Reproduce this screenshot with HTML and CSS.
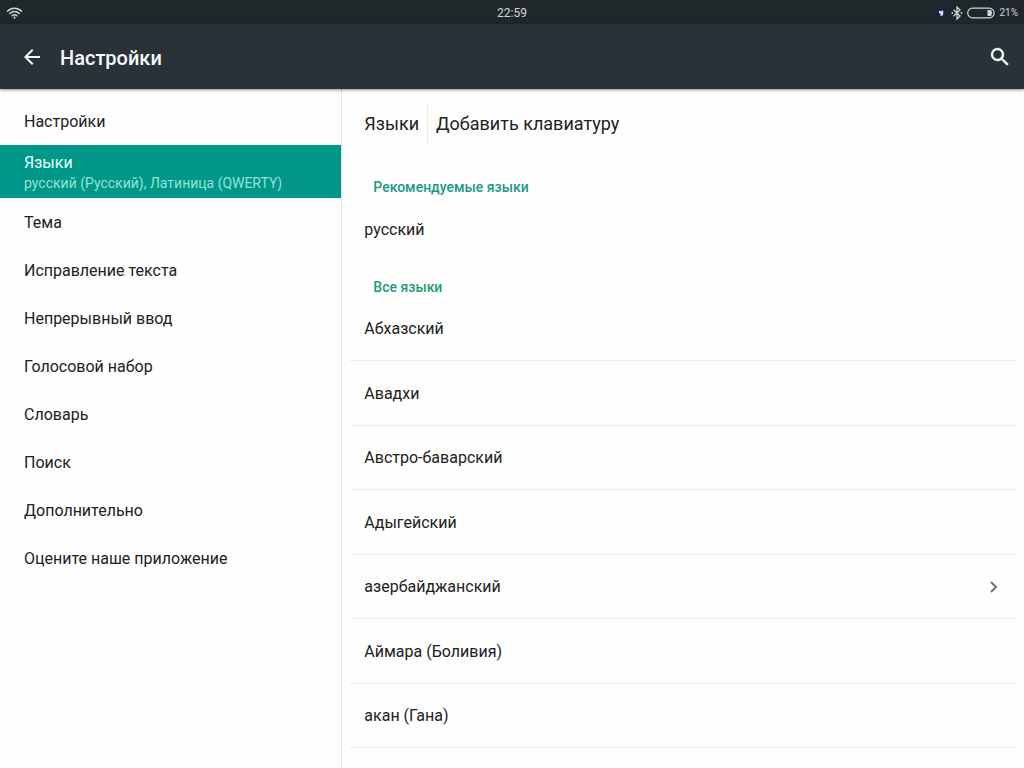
FILE: index.html
```html
<!DOCTYPE html>
<html lang="ru">
<head>
<meta charset="utf-8">
<meta name="viewport" content="width=device-width, initial-scale=1">
<title>Настройки</title>
<link rel="stylesheet" href="styles.css">
</head>
<body>
<div class="status">
  <div class="status-start">
    <svg class="wifi" viewBox="0 0 16 12" aria-hidden="true">
      <g fill="none" stroke="currentColor" stroke-width="1.5" stroke-linecap="round">
        <path d="M1 4.2C5 .1 11 .1 15 4.2"/>
        <path d="M3.3 6.5C6 3.8 10 3.8 12.7 6.5"/>
        <path d="M5.6 8.8C7 7.5 9 7.5 10.4 8.8"/>
      </g>
      <circle cx="8" cy="10.7" r="1.1" fill="currentColor"/>
    </svg>
  </div>
  <time class="clock">22:59</time>
  <div class="status-end">
    <svg class="app-dot" viewBox="0 0 12 12" aria-hidden="true">
      <rect width="12" height="12" rx="3" fill="#1b2340"/>
      <path d="M4 3.4 5.8 4.2 8.2 3.2V7.2C8.2 8.6 6.6 9 4.8 8.5L6 7.2 4 6Z" fill="#d3dfea"/>
    </svg>
    <svg class="bluetooth" viewBox="0 0 12 14" aria-hidden="true">
      <path d="M2.5 3.8 9 10 6 13V1L9 4 2.5 10.2" fill="none" stroke="currentColor" stroke-width="1.3"/>
      <circle cx="1.3" cy="7" r=".9" fill="currentColor"/>
      <circle cx="10.5" cy="7" r=".9" fill="currentColor"/>
    </svg>
    <svg class="battery" viewBox="0 0 28 12" aria-hidden="true">
      <rect x=".7" y="1.2" width="26.4" height="9.6" rx="4.8" fill="none" stroke="currentColor" stroke-width="1.2"/>
      <path d="M20.5 3H24.2Q26 6 24.2 9H20.5Z" fill="currentColor"/>
    </svg>
    <span>21%</span>
  </div>
</div>

<header class="toolbar">
  <button class="icon-button" type="button" aria-label="Назад">
    <svg viewBox="0 0 24 24" aria-hidden="true"><path fill="currentColor" d="M20 11H7.83l5.59-5.59L12 4l-8 8 8 8 1.41-1.41L7.83 13H20v-2z"/></svg>
  </button>
  <h1 class="title">Настройки</h1>
  <button class="icon-button" type="button" aria-label="Поиск">
    <svg viewBox="0 0 24 24" aria-hidden="true"><path fill="currentColor" stroke="currentColor" stroke-width=".4" d="M15.5 14h-.79l-.28-.27A6.47 6.47 0 0 0 16 9.5 6.5 6.5 0 1 0 9.5 16c1.61 0 3.09-.59 4.23-1.57l.27.28v.79l5 4.99L20.49 19l-4.99-5zm-6 0C7.01 14 5 11.99 5 9.5S7.01 5 9.5 5 14 7.01 14 9.5 11.99 14 9.5 14z"/></svg>
  </button>
</header>

<div class="columns">
  <nav class="sidebar">
    <a class="nav-item" href="#settings">Настройки</a>
    <a class="nav-item selected" href="#languages" aria-current="page">Языки<span class="summary">русский (Русский), Латиница (QWERTY)</span></a>
    <a class="nav-item" href="#theme">Тема</a>
    <a class="nav-item" href="#correction">Исправление текста</a>
    <a class="nav-item" href="#flow">Непрерывный ввод</a>
    <a class="nav-item" href="#voice">Голосовой набор</a>
    <a class="nav-item" href="#dictionary">Словарь</a>
    <a class="nav-item" href="#search">Поиск</a>
    <a class="nav-item" href="#more">Дополнительно</a>
    <a class="nav-item" href="#rate">Оцените наше приложение</a>
  </nav>

  <main class="content">
    <div class="crumbs">
      <a class="crumb" href="#languages">Языки</a>
      <a class="crumb" href="#add" aria-current="page">Добавить клавиатуру</a>
    </div>
    <h2 class="section">Рекомендуемые языки</h2>
    <ul class="list suggested">
      <li class="row"><a class="language" href="#ru">русский</a></li>
    </ul>
    <h2 class="section">Все языки</h2>
    <ul class="list">
      <li class="row"><a class="language" href="#ab">Абхазский</a></li>
      <li class="row"><a class="language" href="#awa">Авадхи</a></li>
      <li class="row"><a class="language" href="#bar">Австро-баварский</a></li>
      <li class="row"><a class="language" href="#ady">Адыгейский</a></li>
      <li class="row"><a class="language" href="#az">азербайджанский
        <svg class="chevron" viewBox="0 0 10 14" aria-hidden="true"><path d="M2 2 7 7 2 12" fill="none" stroke="currentColor" stroke-width="2"/></svg></a></li>
      <li class="row"><a class="language" href="#ay">Аймара (Боливия)</a></li>
      <li class="row"><a class="language" href="#ak">акан (Гана)</a></li>
    </ul>
  </main>
</div>
</body>
</html>
```
FILE: styles.css
```css
* {
  box-sizing: border-box;
}

body {
  margin: 0;
  min-height: 100vh;
  display: flex;
  flex-direction: column;
  background: #fefefe;
  color: #212121;
  font: 16px/20px Roboto, "Noto Sans", sans-serif;
}

a {
  color: inherit;
  text-decoration: none;
}

svg {
  display: block;
}

.status {
  display: grid;
  grid-template-columns: 1fr auto 1fr;
  align-items: center;
  height: 24px;
  padding: 2px 6px 0;
  background: #20272b;
  color: #d0d5d8;
  font-size: 12px;
}

.status-end {
  display: flex;
  align-items: center;
  justify-content: flex-end;
  gap: 4px;
  font-size: 10px;
}

.wifi {
  width: 17px;
  height: 12px;
}

.app-dot {
  width: 12px;
  height: 12px;
}

.bluetooth {
  width: 12px;
  height: 14px;
}

.battery {
  width: 28px;
  height: 12px;
}

.toolbar {
  display: flex;
  align-items: center;
  height: 65px;
  padding: 0 12px 0 20px;
  background: #283237;
  color: #f7fafb;
  box-shadow: 0 1px 3px rgba(0, 0, 0, 0.45);
  z-index: 1;
}

.icon-button {
  width: 24px;
  height: 24px;
  padding: 0;
  border: 0;
  background: none;
  color: inherit;
}

.title {
  flex: 1;
  margin: 0;
  padding: 2px 16px 0;
  font-size: 20px;
  line-height: 24px;
  font-weight: 500;
}

.columns {
  flex: 1;
  display: grid;
  grid-template-columns: 1fr 2fr;
}

.sidebar {
  padding-top: 8px;
}

.nav-item {
  display: block;
  padding: 15px 24px 13px;
}

.nav-item.selected {
  padding: 8px 24px 5px;
  background: #009788;
  color: #e2fffb;
}

.summary {
  display: block;
  color: #93e2d8;
  font-size: 14px;
}

.content {
  padding: 14px 8px 0;
  border-left: 1px solid #dddfe0;
}

.crumbs {
  display: flex;
  margin: 0 0 18px 6px;
  font-size: 18px;
}

.crumb {
  padding: 11px 8px 9px;
}

.crumb + .crumb {
  border-left: 1px solid #eceeee;
}

.section {
  margin: 0;
  padding: 16px 23px 0;
  color: #1b9a80;
  font-size: 14px;
  line-height: 20px;
  font-weight: 500;
}

.list {
  margin: 0;
  padding: 0;
  list-style: none;
}

.row {
  height: 64px;
  border-bottom: 1px solid #ececec;
}

.row:nth-child(even) {
  height: 65px;
}

.suggested .row {
  border-bottom: 0;
}

.language {
  display: flex;
  align-items: center;
  justify-content: space-between;
  height: 100%;
  padding: 1px 14px 0;
}

.chevron {
  width: 10px;
  height: 14px;
  margin-right: 3px;
  color: #737373;
}
```
